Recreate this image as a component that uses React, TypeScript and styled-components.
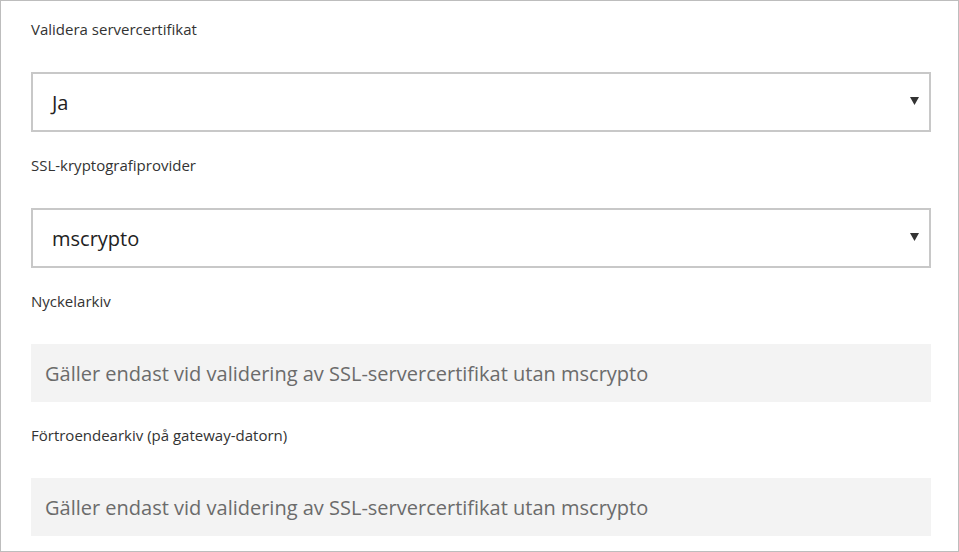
import React from 'react';
import styled, { createGlobalStyle } from 'styled-components';

const GlobalStyle = createGlobalStyle`
  html, body {
    margin: 0;
    padding: 0;
    background: #ffffff;
  }
  * {
    box-sizing: border-box;
  }
`;

const Panel = styled.div`
  width: 959px;
  height: 552px;
  border: 1px solid #bdbdbd;
  padding: 18px 27px 0 30px;
  display: flex;
  flex-direction: column;
  gap: 23px;
  font-family: 'Open Sans', 'Noto Sans', sans-serif;
  overflow: hidden;
`;

const Field = styled.div`
  display: flex;
  flex-direction: column;
  gap: 33px;
`;

const Label = styled.label`
  font-size: 15px;
  line-height: 20px;
  height: 20px;
  color: #333333;
`;

const SelectBox = styled.div`
  height: 60px;
  border: 2px solid #c8c8c8;
  display: flex;
  align-items: center;
  justify-content: space-between;
  padding: 0 10px 0 19px;
  background: #ffffff;
  cursor: pointer;
`;

const SelectValue = styled.span`
  font-size: 20px;
  color: #222222;
`;

const Caret = styled.svg`
  width: 9px;
  height: 8px;
  margin-top: -2px;
`;

const TextInput = styled.input`
  height: 58px;
  border: none;
  outline: none;
  background: #f3f3f3;
  padding: 0 14px;
  font-family: inherit;
  font-size: 20px;
  color: #222222;

  &::placeholder {
    color: #6b6b6b;
  }
`;

type SelectProps = { label: string; value: string };

function SelectField({ label, value }: SelectProps) {
  return (
    <Field>
      <Label>{label}</Label>
      <SelectBox role="combobox">
        <SelectValue>{value}</SelectValue>
        <Caret viewBox="0 0 9 8">
          <path d="M0 0 H9 L4.5 8 Z" fill="#333333" />
        </Caret>
      </SelectBox>
    </Field>
  );
}

type InputProps = { label: string; placeholder: string };

function InputField({ label, placeholder }: InputProps) {
  return (
    <Field>
      <Label>{label}</Label>
      <TextInput readOnly placeholder={placeholder} />
    </Field>
  );
}

const hint = 'Gäller endast vid validering av SSL-servercertifikat utan mscrypto';

export default function App() {
  return (
    <>
      <GlobalStyle />
      <Panel>
        <SelectField label="Validera servercertifikat" value="Ja" />
        <SelectField label="SSL-kryptografiprovider" value="mscrypto" />
        <InputField label="Nyckelarkiv" placeholder={hint} />
        <InputField label="Förtroendearkiv (på gateway-datorn)" placeholder={hint} />
      </Panel>
    </>
  );
}
